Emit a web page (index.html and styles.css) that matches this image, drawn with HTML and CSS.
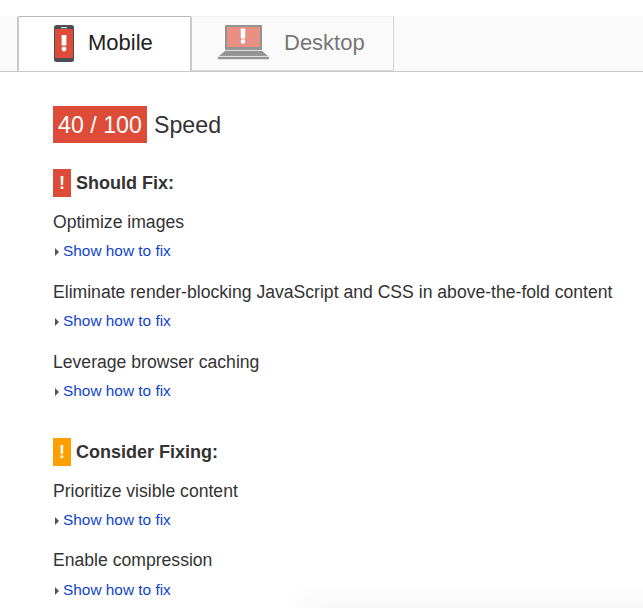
FILE: index.html
```html
<!DOCTYPE html>
<html lang="en">
<head>
<meta charset="utf-8">
<title>Page speed</title>
<link rel="stylesheet" href="styles.css">
</head>
<body>
<nav class="tabs">
  <a class="tab active">
    <svg class="phone" width="20" height="37" viewBox="0 0 20 37">
      <rect width="20" height="37" rx="2.5" fill="#4b4e50"/>
      <rect x="1" y="4" width="18" height="29" fill="#dd4b39"/>
      <rect x="7" y="2" width="6" height="1.3" rx=".6" fill="#ddd"/>
      <path d="M7.6 10h4.8v10.5H7.6z" fill="#fff"/>
      <circle cx="10" cy="24" r="2.4" fill="#fff"/>
    </svg>
    <span>Mobile</span>
  </a>
  <a class="tab inactive">
    <svg class="laptop" width="51" height="35" viewBox="0 0 51 35">
      <rect x="7" width="37" height="25" rx="1" fill="#949494"/>
      <rect x="9" y="2" width="33" height="20" fill="#e98f83"/>
      <path d="M7 26h37l6 5H1z" fill="#949494"/>
      <path d="M7 25.4h37" stroke="#d2d2d2" stroke-width=".8"/>
      <path d="M0 31.4h51" stroke="#d2d2d2" stroke-width=".8"/>
      <rect y="32" width="51" height="2.2" rx=".5" fill="#949494"/>
      <path d="M22.7 3.5h4.6l-.2 10h-4.2z" fill="#fff"/>
      <circle cx="25" cy="16.6" r="2.3" fill="#fff"/>
    </svg>
    <span>Desktop</span>
  </a>
</nav>
<main class="report">
  <h1 class="score"><span class="score-box">40 / 100</span>Speed</h1>
  <section class="group">
    <h2 class="heading"><span class="mark red">!</span>Should Fix:</h2>
    <div class="rule"><p>Optimize images</p><a class="more">Show how to fix</a></div>
    <div class="rule"><p>Eliminate render-blocking JavaScript and CSS in above-the-fold content</p><a class="more">Show how to fix</a></div>
    <div class="rule"><p>Leverage browser caching</p><a class="more">Show how to fix</a></div>
  </section>
  <section class="group">
    <h2 class="heading"><span class="mark orange">!</span>Consider Fixing:</h2>
    <div class="rule"><p>Prioritize visible content</p><a class="more">Show how to fix</a></div>
    <div class="rule last"><p>Enable compression</p><a class="more">Show how to fix</a></div>
  </section>
</main>
<div class="shade"></div>
</body>
</html>
```
FILE: styles.css
```css
* { box-sizing: border-box; }
html { height: 100%; overflow: hidden; }
body {
  margin: 0;
  padding-top: 16px;
  height: 608px;
  overflow: hidden;
  position: relative;
  background: #fff;
  color: #333;
  font-family: "Liberation Sans", Arial, sans-serif;
}
.tabs {
  display: flex;
  height: 56px;
  padding-left: 17px;
  background: #fafafa;
  border-bottom: 1px solid #c8c8c8;
}
.tab {
  display: flex;
  font-size: 22px;
  line-height: 51px;
}
.tab svg { margin-top: 8px; }
.active {
  width: 175px;
  height: 55px;
  padding-left: 35px;
  gap: 14px;
  background: #fff;
  border: 2px solid #cacaca;
  border-top: 1px solid #b8b8b8;
  border-bottom: 0;
  color: #222;
  border-radius: 2px 2px 0 0;
}
.inactive {
  width: 202px;
  height: 55px;
  padding-left: 26px;
  gap: 15px;
  border-right: 1px solid #d4d4d4;
  border-top: 1px solid #f0f0f0;
  border-bottom: 1px solid #d8d8d8;
  color: #777;
}
.report { padding: 34px 0 0 53px; }
.score {
  display: flex;
  gap: 7px;
  height: 37px;
  margin: 0 0 26px;
  font-size: 23.2px;
  font-weight: 400;
  line-height: 39px;
}
.score-box {
  width: 94px;
  height: 37px;
  text-align: center;
  background: #dd4b39;
  color: #fff;
}
.group { margin-bottom: 35px; }
.heading {
  display: flex;
  gap: 5px;
  margin: 0 0 13px;
  font-size: 18px;
  line-height: 28px;
}
.mark {
  width: 18px;
  text-align: center;
  color: #fff;
}
.red { background: #dd4b39; }
.orange { background: #ffa000; }
.rule { margin-bottom: 17px; }
.rule p {
  margin: 0 0 5px;
  font-size: 17.6px;
  line-height: 24px;
  white-space: nowrap;
}
.rule.last { margin-top: -1px; }
.rule.last p { margin-bottom: 6px; }
.more {
  display: flex;
  align-items: center;
  gap: 4px;
  padding-left: 2px;
  font-size: 15.4px;
  line-height: 24px;
  color: #1144cc;
}
.more::before {
  content: "";
  border-left: 4px solid #555;
  border-top: 4px solid transparent;
  border-bottom: 4px solid transparent;
  margin-top: 2px;
}
.shade {
  position: absolute;
  left: 280px;
  right: 0;
  bottom: 0;
  height: 28px;
  background: radial-gradient(ellipse 50px 28px at 50px 100%, #f8f8f8, #fff) 0 0 / 50px 100% no-repeat,
    linear-gradient(#fff, #f8f8f8) 50px 0 no-repeat;
}
```
